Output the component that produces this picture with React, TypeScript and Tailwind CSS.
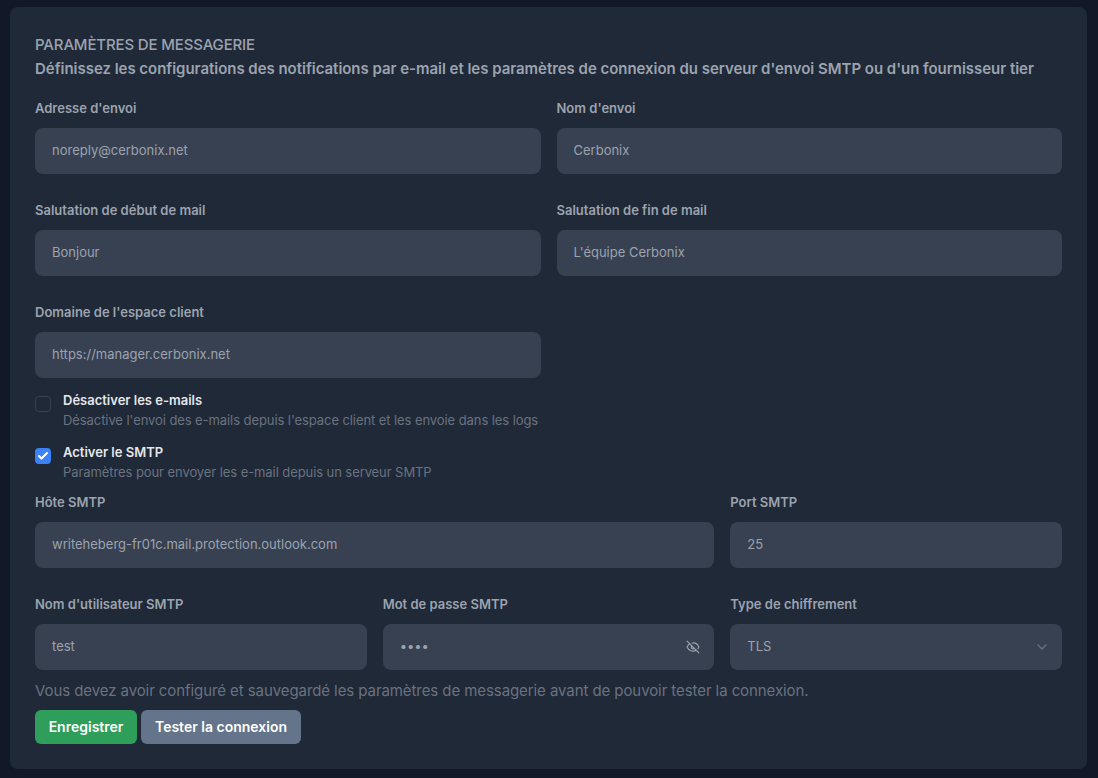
import { ChevronDown, Check, EyeOff } from "lucide-react";

const Field = ({ label, value, className = "", children }: { label: string; value: string; className?: string; children?: React.ReactNode }) => (
  <div className={className}>
    <label className="mb-[10px] block h-5 text-[13px] leading-5 font-semibold text-[#9ca3af]">{label}</label>
    <div className="flex h-[46px] items-center justify-between rounded-lg bg-[#374151] px-[17px] text-[13px] text-[#9ca3af]">
      <span>{value}</span>
      {children}
    </div>
  </div>
);

const Toggle = ({ checked, title, help }: { checked?: boolean; title: string; help: string }) => (
  <div className="flex h-[42px] items-start">
    <div
      className={
        "mt-[6px] flex h-4 w-4 items-center justify-center rounded " +
        (checked ? "bg-[#3b82f6]" : "border border-[#374151] bg-[#1f2937]")
      }
    >
      {checked && <Check className="h-3 w-3 text-white" strokeWidth={4} />}
    </div>
    <div className="ml-3 text-[13px] leading-5">
      <div className="font-semibold text-[#e5e7eb]">{title}</div>
      <div className="tracking-[-0.08px] text-[#6b7280]">{help}</div>
    </div>
  </div>
);

export default function App() {
  return (
    <div className="min-h-[778px] bg-[#111827] px-[10px] pt-[7px] font-['Inter',sans-serif]">
      <div className="h-[762px] w-[1077px] rounded-lg bg-[#1f2937] px-[25px] pt-[28px]">
        <h2 className="text-[15px] leading-5 font-medium tracking-[-0.15px] text-[#9ca3af]">PARAMÈTRES DE MESSAGERIE</h2>
        <p className="mt-1 text-[15px] leading-5 font-semibold tracking-[-0.03px] text-[#9ca3af]">
          Définissez les configurations des notifications par e-mail et les paramètres de connexion du serveur d'envoi SMTP ou d'un fournisseur tier
        </p>

        <div className="mt-[19px] grid grid-cols-2 gap-x-4 gap-y-[26px]">
          <Field label="Adresse d'envoi" value="noreply@cerbonix.net" />
          <Field label="Nom d'envoi" value="Cerbonix" />
          <Field label="Salutation de début de mail" value="Bonjour" />
          <Field label="Salutation de fin de mail" value="L'équipe Cerbonix" />
          <Field label="Domaine de l'espace client" value="https://manager.cerbonix.net" />
        </div>

        <div className="mt-[12px] flex flex-col gap-[10px]">
          <Toggle title="Désactiver les e-mails" help="Désactive l'envoi des e-mails depuis l'espace client et les envoie dans les logs" />
          <Toggle checked title="Activer le SMTP" help="Paramètres pour envoyer les e-mail depuis un serveur SMTP" />
        </div>

        <div className="mt-[8px] grid grid-cols-3 gap-x-4 gap-y-[26px]">
          <Field label="Hôte SMTP" value="writeheberg-fr01c.mail.protection.outlook.com" className="col-span-2" />
          <Field label="Port SMTP" value="25" />
          <Field label="Nom d'utilisateur SMTP" value="test" />
          <Field label="Mot de passe SMTP" value="••••">
            <EyeOff className="-mr-[3px] h-[14px] w-[14px] text-[#9ca3af]" />
          </Field>
          <Field label="Type de chiffrement" value="TLS">
            <ChevronDown className="-mr-[5px] h-4 w-4 text-[#6b7280]" />
          </Field>
        </div>

        <p className="mt-[11px] text-[15px] leading-5 tracking-[-0.08px] text-[#6b7280]">
          Vous devez avoir configuré et sauvegardé les paramètres de messagerie avant de pouvoir tester la connexion.
        </p>

        <div className="mt-[9px] flex gap-[4px]">
          <button className="h-[34px] w-[102px] rounded-md bg-[#2f9e5a] text-sm font-semibold text-white">Enregistrer</button>
          <button className="h-[34px] w-[160px] rounded-md bg-[#64748b] text-sm font-semibold text-white">Tester la connexion</button>
        </div>
      </div>
    </div>
  );
}
